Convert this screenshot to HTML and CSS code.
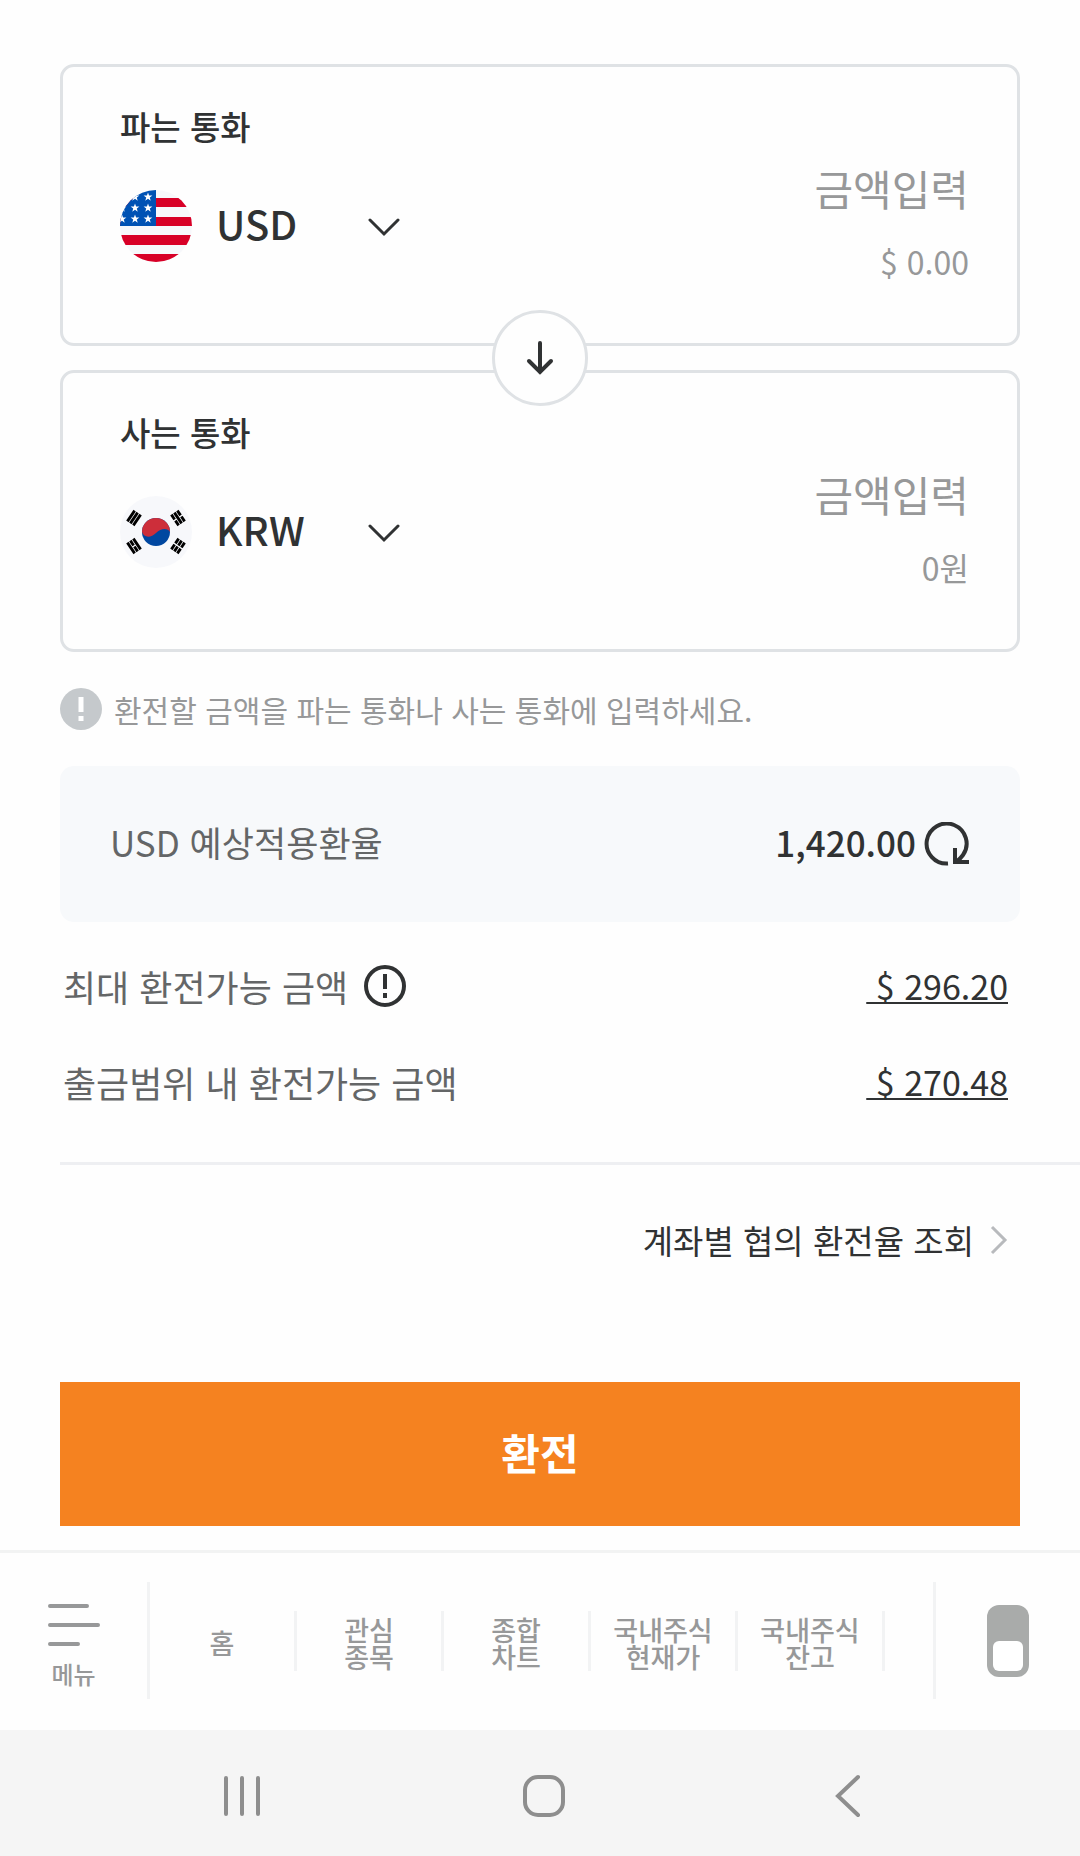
FILE: index.html
```html
<!DOCTYPE html>
<html lang="ko">
<head>
    <meta charset="UTF-8">
    <meta name="viewport" content="width=device-width, initial-scale=1.0">
    <title>환전</title>
    <link rel="stylesheet" href="styles.css">
</head>
<body>
    <main class="exchange">
        <!-- Currency cards -->
        <section class="cards">
            <div class="card">
                <div class="card-left">
                    <label class="card-title" for="sellCurrency">파는 통화</label>
                    <div class="currency">
                        <svg class="flag" viewBox="0 0 72 72" aria-hidden="true">
                            <defs>
                                <clipPath id="round"><circle cx="36" cy="36" r="36"/></clipPath>
                                <path id="star" d="M0-4.6 1.1-1.5H4.4L1.8.5 2.7 3.7 0 1.8-2.7 3.7-1.8.5-4.4-1.5H-1.1Z" fill="#fff"/>
                            </defs>
                            <g clip-path="url(#round)">
                                <rect width="72" height="72" fill="#f7f8fb"/>
                                <path d="M0 8h72v9H0zM0 27h72v9H0zM0 45h72v10H0zM0 64h72v8H0z" fill="#d80027"/>
                                <rect width="36" height="36" fill="#0052b4"/>
                                <use href="#star" x="15" y="7"/>
                                <use href="#star" x="28" y="7"/>
                                <use href="#star" x="2" y="18"/>
                                <use href="#star" x="15" y="18"/>
                                <use href="#star" x="28" y="18"/>
                                <use href="#star" x="2" y="29"/>
                                <use href="#star" x="15" y="29"/>
                                <use href="#star" x="28" y="29"/>
                            </g>
                        </svg>
                        <div class="select-wrap">
                            <select id="sellCurrency">
                                <option selected>USD</option>
                                <option>KRW</option>
                            </select>
                            <svg class="chevron" viewBox="0 0 32 20" aria-hidden="true"><path d="M2 3l14 14L30 3"/></svg>
                        </div>
                    </div>
                </div>
                <div class="card-right">
                    <input class="amount" type="text" inputmode="decimal" placeholder="금액입력" aria-label="파는 금액">
                    <span class="converted">$ 0.00</span>
                </div>
            </div>

            <button class="swap" type="button" aria-label="통화 바꾸기">
                <svg viewBox="0 0 28 34" aria-hidden="true"><path d="M14 2v29M3 20l11 11 11-11"/></svg>
            </button>

            <div class="card">
                <div class="card-left">
                    <label class="card-title" for="buyCurrency">사는 통화</label>
                    <div class="currency">
                        <svg class="flag" viewBox="0 0 72 72" aria-hidden="true">
                            <circle cx="36" cy="36" r="36" fill="#f7f8fb"/>
                            <circle cx="36" cy="36" r="14" fill="#0047a0"/>
                            <path d="M22 36A14 14 0 0 1 50 36C48 32 41 32 36 37S24 42 22 36Z" fill="#cd2e3a"/>
                            <g stroke="#000" stroke-width="2.8">
                                <g transform="translate(14 22) rotate(34)"><path d="M-3.6-6.5V6.5M0-6.5V6.5M3.6-6.5V6.5"/></g>
                                <g transform="translate(58 22) rotate(-34)"><path d="M-3.6-6.5V-.7M-3.6.7V6.5M0-6.5V6.5M3.6-6.5V-.7M3.6.7V6.5"/></g>
                                <g transform="translate(14 50) rotate(-34)"><path d="M-3.6-6.5V6.5M0-6.5V-.7M0 .7V6.5M3.6-6.5V6.5"/></g>
                                <g transform="translate(58 50) rotate(34)"><path d="M-3.6-6.5V-.7M-3.6.7V6.5M0-6.5V-.7M0 .7V6.5M3.6-6.5V-.7M3.6.7V6.5"/></g>
                            </g>
                        </svg>
                        <div class="select-wrap">
                            <select id="buyCurrency">
                                <option>USD</option>
                                <option selected>KRW</option>
                            </select>
                            <svg class="chevron" viewBox="0 0 32 20" aria-hidden="true"><path d="M2 3l14 14L30 3"/></svg>
                        </div>
                    </div>
                </div>
                <div class="card-right">
                    <input class="amount" type="text" inputmode="decimal" placeholder="금액입력" aria-label="사는 금액">
                    <span class="converted">0원</span>
                </div>
            </div>
        </section>

        <p class="notice">
            <svg class="icon" viewBox="0 0 42 42" aria-hidden="true">
                <circle cx="21" cy="21" r="21" fill="#c5c9cc"/>
                <path d="M21 9v15M21 28v5" stroke="#fff" stroke-width="5"/>
            </svg>
            환전할 금액을 파는 통화나 사는 통화에 입력하세요.
        </p>

        <!-- Rate -->
        <div class="rate">
            <span class="rate-label">USD 예상적용환율</span>
            <strong class="rate-value">1,420.00</strong>
            <button class="icon-button" type="button" aria-label="새로고침">
                <svg class="refresh" viewBox="0 0 46 44" aria-hidden="true"><path d="M24 41.500A20 20 0 1 1 39 33Q37 36 32 40M31 26V40H45"/></svg>
            </button>
        </div>

        <!-- Available amounts -->
        <dl class="limits">
            <div class="limit">
                <dt>최대 환전가능 금액
                    <button class="icon-button" type="button" aria-label="도움말">
                        <svg class="icon" viewBox="0 0 42 42" aria-hidden="true">
                            <circle cx="21" cy="21" r="19" fill="none" stroke="#303233" stroke-width="4"/>
                            <path d="M21 9v15M21 28v5" stroke="#303233" stroke-width="4"/>
                        </svg>
                    </button>
                </dt>
                <dd><a href="#">&nbsp;$ 296.20</a></dd>
            </div>
            <div class="limit">
                <dt>출금범위 내 환전가능 금액</dt>
                <dd><a href="#">&nbsp;$ 270.48</a></dd>
            </div>
        </dl>

        <a class="account-link" href="#">계좌별 협의 환전율 조회
            <svg viewBox="0 0 18 30" aria-hidden="true"><path d="M2 2l13 13L2 28"/></svg>
        </a>

        <button class="submit" type="button">환전</button>
    </main>

    <!-- Bottom toolbar -->
    <nav class="toolbar">
        <a class="menu" href="#">
            <svg viewBox="0 0 52 42" aria-hidden="true"><path d="M2 2h37M2 21h48M2 40h28"/></svg>
            메뉴
        </a>
        <div class="tabs">
            <a href="#">홈</a>
            <a href="#">관심<br>종목</a>
            <a href="#">종합<br>차트</a>
            <a href="#">국내주식<br>현재가</a>
            <a href="#">국내주식<br>잔고</a>
        </div>
        <div class="mode">
            <input type="checkbox" aria-label="화면 전환">
        </div>
    </nav>

    <!-- System navigation -->
    <footer class="system-nav">
        <button type="button" aria-label="최근 앱">
            <svg viewBox="0 0 44 44"><path d="M6 4v36M22 4v36M38 4v36"/></svg>
        </button>
        <button type="button" aria-label="홈 화면">
            <svg viewBox="0 0 44 44"><rect x="3" y="3" width="38" height="38" rx="13"/></svg>
        </button>
        <button type="button" aria-label="뒤로">
            <svg viewBox="0 0 44 44"><path d="M33 3L13 22l20 19"/></svg>
        </button>
    </footer>
</body>
</html>
```
FILE: styles.css
```css
* {
    box-sizing: border-box;
}

body {
    margin: 0;
    min-height: 100vh;
    display: flex;
    flex-direction: column;
    background-color: #fefefe;
    color: #303233;
    font-family: "Noto Sans CJK KR", "Noto Sans", sans-serif;
}

button,
input,
select {
    font-family: inherit;
    color: inherit;
    border: none;
    padding: 0;
    margin: 0;
    background: none;
}

a {
    color: inherit;
    text-decoration: none;
}

svg {
    display: block;
    flex: none;
}

.exchange {
    flex: 1;
    display: flex;
    flex-direction: column;
    padding: 64px 60px 24px;
}

/* Currency cards */
.cards {
    position: relative;
    display: flex;
    flex-direction: column;
    gap: 24px;
}

.card {
    display: flex;
    justify-content: space-between;
    padding: 36px 48px 60px 57px;
    border: 3px solid #dfe2e5;
    border-radius: 14px;
}

.card-left {
    display: flex;
    flex-direction: column;
    gap: 40px;
}

.card-title {
    font-size: 33px;
    line-height: 47px;
    font-weight: 500;
}

.currency {
    display: flex;
    align-items: center;
    gap: 24px;
}

.flag {
    width: 72px;
    height: 72px;
}

.select-wrap {
    position: relative;
    width: 184px;
}

select {
    appearance: none;
    display: block;
    width: 100%;
    height: 66px;
    padding-bottom: 6px;
    font-size: 40px;
    font-weight: 500;
}

.chevron {
    position: absolute;
    top: 24px;
    right: 0;
    width: 32px;
    height: 20px;
    fill: none;
    stroke: #303233;
    stroke-width: 3;
    stroke-linecap: round;
    pointer-events: none;
}

.card-right {
    display: flex;
    flex-direction: column;
    align-items: flex-end;
    gap: 20px;
    padding-top: 56px;
    min-width: 0;
    flex: 1;
}

.amount {
    width: 100%;
    height: 60px;
    padding-bottom: 4px;
    font-size: 42px;
    text-align: right;
}

.amount::placeholder {
    color: #979899;
}

.converted {
    font-size: 32px;
    line-height: 44px;
    color: #979899;
}

.swap {
    position: absolute;
    top: 50%;
    left: 50%;
    width: 96px;
    height: 96px;
    margin: -48px 0 0 -48px;
    display: flex;
    align-items: center;
    justify-content: center;
    border: 3px solid #dfe2e5;
    border-radius: 50%;
    background-color: #fefefe;
}

.swap svg {
    width: 28px;
    height: 34px;
    fill: none;
    stroke: #303233;
    stroke-width: 4;
    stroke-linecap: round;
}

.notice {
    display: flex;
    align-items: center;
    gap: 12px;
    margin: 36px 0;
    font-size: 30px;
    line-height: 42px;
    color: #979899;
}

.icon {
    width: 42px;
    height: 42px;
}

/* Rate */
.rate {
    display: flex;
    align-items: center;
    padding: 50px;
    border-radius: 14px;
    background-color: #f7f9fb;
    font-size: 35px;
    line-height: 52px;
}

.rate-label,
.rate-value {
    padding-bottom: 4px;
}

.rate-label {
    flex: 1;
    color: #646667;
}

.rate-value {
    margin-right: 8px;
    font-weight: 500;
}

.icon-button {
    cursor: pointer;
}

.refresh {
    width: 46px;
    height: 44px;
    fill: none;
    stroke: #303233;
    stroke-width: 4;
}

/* Available amounts */
.limits {
    display: flex;
    flex-direction: column;
    gap: 44px;
    margin: 0 -60px 0 0;
    padding: 38px 72px 54px 3px;
    border-bottom: 3px solid #eeeff2;
    font-size: 36px;
    line-height: 52px;
}

.limit {
    display: flex;
    justify-content: space-between;
}

.limit dt {
    display: flex;
    align-items: center;
    gap: 16px;
    color: #646667;
}

.limit dd {
    margin: 0;
    font-size: 34px;
}

.limit a {
    text-decoration: underline;
    text-decoration-thickness: 2px;
    text-decoration-skip-ink: none;
    text-underline-offset: 2px;
}

.account-link {
    align-self: flex-end;
    display: flex;
    align-items: center;
    gap: 16px;
    margin: 51px 12px 0 0;
    font-size: 33px;
    line-height: 48px;
}

.account-link svg {
    width: 18px;
    height: 30px;
    fill: none;
    stroke: #b8babd;
    stroke-width: 3;
}

.submit {
    height: 144px;
    margin-top: auto;
    padding-bottom: 6px;
    background-color: #f58220;
    color: #fff;
    font-size: 42px;
    font-weight: 700;
    cursor: pointer;
}

/* Bottom toolbar */
.toolbar {
    display: flex;
    align-items: center;
    height: 180px;
    padding-bottom: 2px;
    border-top: 3px solid #f2f3f3;
    color: #979899;
    font-weight: 500;
}

.menu {
    width: 150px;
    height: 117px;
    display: flex;
    flex-direction: column;
    align-items: center;
    gap: 12px;
    padding: 22px 0 0;
    border-right: 3px solid #f2f3f4;
    font-size: 24px;
    line-height: 32px;
}

.menu svg {
    width: 52px;
    height: 42px;
    stroke: #979899;
    stroke-width: 4;
    stroke-linecap: round;
}

.tabs {
    flex: 1;
    display: flex;
}

.tabs a {
    flex: none;
    width: 147px;
    height: 60px;
    padding-top: 4px;
    display: flex;
    align-items: center;
    justify-content: center;
    border-right: 3px solid #f2f3f4;
    font-size: 27px;
    line-height: 27px;
    text-align: center;
}

.mode {
    width: 147px;
    height: 117px;
    display: flex;
    align-items: center;
    justify-content: center;
    border-left: 3px solid #f2f3f4;
}

.mode input {
    appearance: none;
    display: flex;
    align-items: flex-end;
    justify-content: center;
    width: 42px;
    height: 72px;
    padding-bottom: 6px;
    border-radius: 12px;
    background-color: #a9abaa;
}

.mode input::before {
    content: "";
    width: 30px;
    height: 30px;
    border-radius: 6px;
    background-color: #fff;
}

/* System navigation */
.system-nav {
    display: flex;
    align-items: center;
    height: 126px;
    padding: 6px 82px 0 91px;
    background-color: #f5f5f5;
}

.system-nav button {
    flex: 1;
    display: flex;
    justify-content: center;
}

.system-nav svg {
    width: 44px;
    height: 44px;
    fill: none;
    stroke: #8e8e8e;
    stroke-width: 4;
    stroke-linecap: round;
}
```
